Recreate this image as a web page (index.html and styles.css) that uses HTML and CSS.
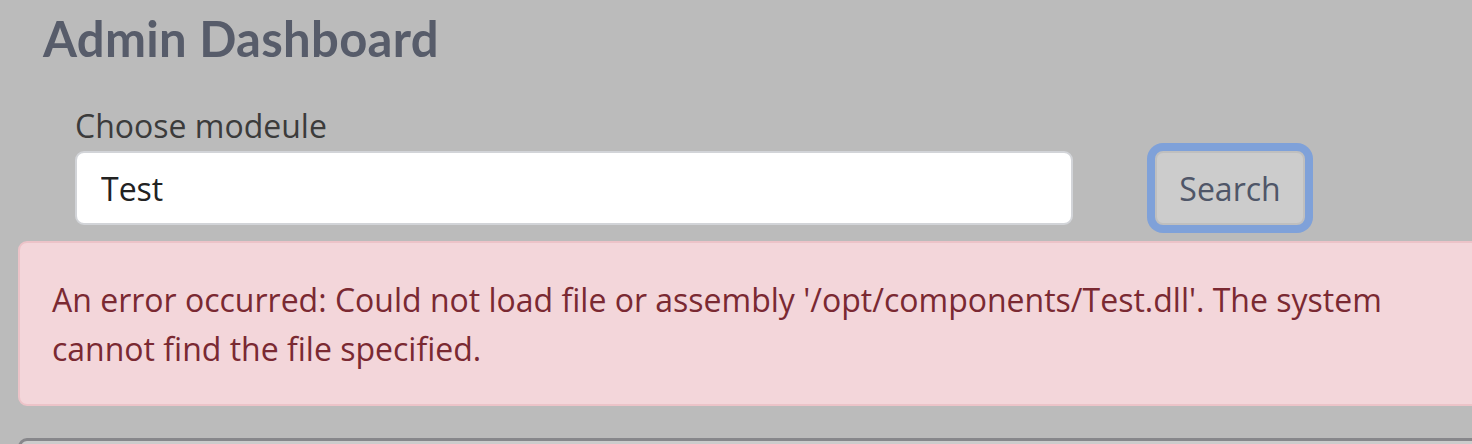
FILE: index.html
```html
<!DOCTYPE html>
<html>
<head>
<meta charset="utf-8">
<link rel="stylesheet" href="styles.css">
</head>
<body>
<div class="page">
  <h1 class="title">Admin Dashboard</h1>
  <form class="search-form">
    <div class="field">
      <label class="field-label" for="module">Choose modeule</label>
      <input class="field-input" id="module" type="text" value="Test">
    </div>
    <div class="btn-wrap">
      <button class="btn-search" type="button">Search</button>
    </div>
  </form>
  <div class="alert">
    <p class="alert-text">An error occurred: Could not load file or assembly '/opt/components/Test.dll'. The system cannot find the file specified.</p>
  </div>
  <div class="panel"></div>
</div>
</body>
</html>
```

FILE: styles.css
```css
html, body {
  margin: 0;
  padding: 0;
  background: #bbbbbb;
  overflow: hidden;
}
body {
  font-family: "Open Sans", "Noto Sans", sans-serif;
  color: #3a3a3a;
}
.page {
  padding: 0 0 0 18px;
  width: 1500px;
}
.title {
  margin: 0;
  padding: 12px 0 0 25px;
  font-family: Lato, "Open Sans", sans-serif;
  font-weight: 700;
  font-size: 49px;
  line-height: 52px;
  color: #575c6a;
  letter-spacing: 0.3px;
}
.search-form {
  display: flex;
  align-items: flex-end;
  padding: 43px 0 0 57px;
  gap: 82px;
}
.field {
  display: flex;
  flex-direction: column;
}
.field-label {
  font-size: 32px;
  line-height: 38px;
  color: #3b3b3b;
  margin-bottom: 6px;
}
.field-input {
  box-sizing: border-box;
  width: 998px;
  height: 74px;
  border: 2px solid #d2d4d8;
  border-radius: 9px;
  background: #ffffff;
  padding: 0 24px;
  font-family: "Open Sans", sans-serif;
  font-size: 32px;
  color: #222222;
  outline: none;
}
.btn-wrap {
  display: flex;
}
.btn-search {
  box-sizing: border-box;
  width: 150px;
  height: 74px;
  background: #cccccc;
  border: 2px solid #bfbfbf;
  border-radius: 8px;
  box-shadow: 0 0 0 8px #7fa1d9;
  font-family: "Open Sans", sans-serif;
  font-size: 32px;
  color: #4f5668;
  padding: 0;
}
.alert {
  box-sizing: border-box;
  margin-top: 16px;
  width: 1480px;
  height: 165px;
  background: #f3d6da;
  border: 2px solid #ecc3c8;
  border-radius: 9px;
  padding: 32px 32px 0 32px;
}
.alert-text {
  margin: 0;
  max-width: 1345px;
  font-size: 32px;
  line-height: 49px;
  color: #7a2932;
}
.panel {
  margin-top: 32px;
  width: 1480px;
  height: 60px;
  background: #cccccc;
  border: 3px solid #87878b;
  border-radius: 9px;
}
```
